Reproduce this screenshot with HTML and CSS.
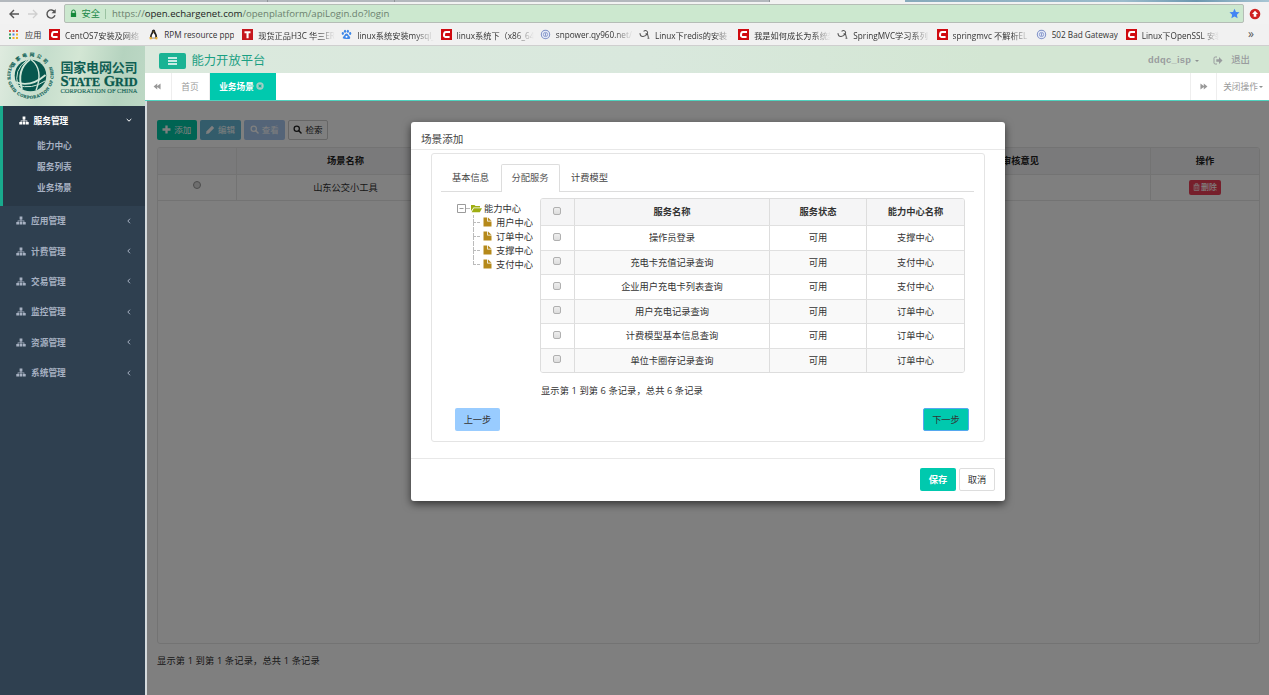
FILE: index.html
```html
<!DOCTYPE html>
<html lang="zh-CN">
<head>
<meta charset="utf-8">
<title>能力开放平台</title>
<link rel="stylesheet" href="styles.css">
</head>
<body>
<svg class="defs" aria-hidden="true">
  <symbol id="sitemap" viewBox="0 0 18 16"><path d="M6.500 1h5v5h-1.700v2.200h5.200v2.300H17.500v4.500h-5v-4.500h1.200v-1h-3.900v1h1.700v4.500h-5v-4.500h1.700v-1H4.300v1h1.200v4.500h-5v-4.500H3V8.200h5.200V6H6.500z"/></symbol>
  <symbol id="csdn" viewBox="0 0 11 11"><path fill="#d00a10" d="M0 0h11v11H0z"/><path d="M9 3H4.900Q3.400 3 3.200 4.500l-.2 1.700Q2.900 7.900 4.400 7.900h4.200" fill="none" stroke="#fff" stroke-width="2"/></symbol>
  <symbol id="globe" viewBox="0 0 12 12"><circle cx="6" cy="6" r="4.600" fill="#e6ebf8" stroke="#7f90c6" stroke-width="1.100"/><circle cx="6" cy="6" r="2.300" fill="none" stroke="#7f90c6" stroke-width=".9"/><path d="M6 4.500v3" stroke="#7f90c6"/></symbol>
  <symbol id="squirrel" viewBox="0 0 12 12"><path d="M1 4.500q.5 4 3.500 3.700T9.500 5M5 2.500q2.500-2 4 .3T7 5.500M9 4.500l1.300 5M9.300 10h2" fill="none" stroke="#555" stroke-width="1.100"/></symbol>
  <symbol id="search" viewBox="0 0 12 12"><circle cx="5" cy="5" r="3.500" fill="none" stroke="currentColor" stroke-width="1.700"/><path d="M7.700 7.700l3 3" stroke="currentColor" stroke-width="2" stroke-linecap="round"/></symbol>
  <symbol id="rewind" viewBox="0 0 10 8"><path d="M.5 4L4.700.500v2.800L8.500.500v7L4.700 4.700v2.800z"/></symbol>
  <symbol id="file" viewBox="0 0 9 10"><path fill="#b5891a" d="M.5.500h3.700v4h4.300v5h-8z"/><path fill="#b5891a" d="M5 .500l3.500 3.200H5z"/></symbol>
</svg>

<div class="window">
  <div class="strip"><i></i><i></i><i></i><b></b></div>
  <div class="toolbar">
    <svg class="nav-ico" viewBox="0 0 12 12"><path d="M11 6H2M6 2L2 6l4 4" fill="none" stroke="#555" stroke-width="1.400"/></svg>
    <svg class="nav-ico" viewBox="0 0 12 12"><path d="M1 6h9M6 2l4 4-4 4" fill="none" stroke="#cfcfcf" stroke-width="1.300"/></svg>
    <svg class="nav-ico" viewBox="0 0 12 12"><path d="M9.700 4A4.100 4.100 0 1 0 10 7.300" fill="none" stroke="#555" stroke-width="1.400"/><path d="M10.700 1v4.200H6.500z" fill="#555"/></svg>
    <div class="address">
      <svg class="lock" viewBox="0 0 8 10"><path d="M2 5V3a2 2 0 0 1 4 0v2" fill="none" stroke="#15883a" stroke-width="1.200"/><path d="M1 4.300h6v4.700H1z" fill="#15883a"/></svg>
      <span class="safe">安全</span><span class="sep"></span>
      <span class="url">https://<em>open.echargenet.com</em>/openplatform/apiLogin.do?login</span>
      <svg class="star" viewBox="0 0 12 12"><path fill="#4285f4" d="M6 .800l1.600 3.500 3.900.4-2.900 2.600.8 3.900L6 9.200l-3.400 2 .8-3.900L.5 4.700l3.900-.4z"/></svg>
    </div>
    <svg class="ext" viewBox="0 0 12 12"><circle cx="6" cy="6" r="5.300" fill="#cf2222"/><path fill="#fff" d="M6 2.700L9 6H7.300v2.700H4.700V6H3z"/></svg>
  </div>
  <div class="bookmarks">
    <div class="apps"><svg viewBox="0 0 11 11"><path fill="#e35343" d="M1 1h2v2H1zM4.500 1h2v2h-2zM8 1h2v2H8z"/><path fill="#37a25d" d="M1 4.500h2v2H1z"/><path fill="#4b83e2" d="M4.500 4.500h2v2h-2z"/><path fill="#efb324" d="M8 4.500h2v2H8zM4.500 8h2v2h-2zM8 8h2v2H8z"/><path fill="#37a25d" d="M1 8h2v2H1z"/></svg><span>应用</span></div>
    <div class="bm"><svg><use href="#csdn"/></svg><span>CentOS7安装及网络</span></div>
    <div class="bm w94"><svg viewBox="0 0 12 12"><path fill="#222" d="M6 .500q2 0 2 2.500 2.500 4 2 7H2q-.3-3 2-6.500Q4 .500 6 .500z"/><path fill="#fff" d="M6 4q2.300 2 2 5.500H4Q3.700 6 6 4z"/><path fill="#e8b23a" d="M5 3h2L6 4.200zM1.500 9l2-.5 1.500 2.500-3 .5zM10.500 9l-2-.5L7 11l3 .5z"/></svg><span>RPM resource ppp</span></div>
    <div class="bm"><svg viewBox="0 0 11 11"><path fill="#c5161d" d="M0 0h11v11H0z"/><path fill="#fff" d="M2.500 2.300h6v1.900H6.600v5H4.500v-5h-2z"/></svg><span>现货正品H3C 华三ER</span></div>
    <div class="bm"><svg viewBox="0 0 12 12"><g fill="#3d87e8"><ellipse cx="2" cy="5" rx="1.200" ry="1.600"/><ellipse cx="4.400" cy="2.500" rx="1.200" ry="1.700"/><ellipse cx="7.500" cy="2.500" rx="1.200" ry="1.700"/><ellipse cx="10" cy="5" rx="1.200" ry="1.600"/><path d="M6 5q1.400 0 2.400 2 2.300 1.600 1.600 3T6 10.900t-4-.9 1.600-3Q4.600 5 6 5z"/></g><circle cx="6" cy="8.500" r="1.100" fill="#fff"/></svg><span>linux系统安装mysql_</span></div>
    <div class="bm"><svg><use href="#csdn"/></svg><span>linux系统下（x86_64</span></div>
    <div class="bm"><svg><use href="#globe"/></svg><span>snpower.qy960.net/</span></div>
    <div class="bm"><svg><use href="#squirrel"/></svg><span>Linux下redis的安装 -</span></div>
    <div class="bm"><svg><use href="#csdn"/></svg><span>我是如何成长为系统架</span></div>
    <div class="bm"><svg><use href="#squirrel"/></svg><span>SpringMVC学习系列</span></div>
    <div class="bm"><svg><use href="#csdn"/></svg><span>springmvc 不解析EL</span></div>
    <div class="bm w90"><svg><use href="#globe"/></svg><span>502 Bad Gateway</span></div>
    <div class="bm"><svg><use href="#csdn"/></svg><span>Linux下OpenSSL 安装</span></div>
    <div class="more">»</div>
  </div>

  <div class="app">
    <aside class="side">
      <div class="logo">
        <svg width="145" height="60" viewBox="0 0 145 60">
          <circle cx="30.500" cy="29.500" r="15.800" fill="#06584e"/>
          <g fill="none" stroke="#cfe6d7">
            <path d="M30 13.500Q16 24 22 43" stroke-width="1.900"/>
            <path d="M27 14.200Q13 24 18 40" stroke-width="1"/>
            <path d="M15.500 36q15 6 30-7" stroke-width="1.700"/>
            <path d="M17 39q15 5 28-4" stroke-width="1"/>
            <path d="M31 13.500q13 10 5 31" stroke-width="1.400"/>
          </g>
          <path id="ringTop" d="M13.500 21.500A18.500 18.500 0 0 1 47.500 21.500" fill="none"/>
          <path id="ringLow" d="M11 19.500A22 22 0 1 0 50 19.500" fill="none"/>
          <text class="ring-cn"><textPath href="#ringTop" textLength="39">国家电网公司</textPath></text>
          <text class="ring-en"><textPath href="#ringLow" textLength="92">STATE GRID CORPORATION OF CHINA</textPath></text>
          <text class="brand-cn" x="60.500" y="26" textLength="77">国家电网公司</text>
          <text class="brand-en" x="60.500" y="40.300" textLength="77" lengthAdjust="spacingAndGlyphs">S<tspan class="sc">TATE</tspan> G<tspan class="sc">RID</tspan></text>
          <text class="brand-sub" x="60.500" y="47" textLength="77" lengthAdjust="spacingAndGlyphs">CORPORATION OF CHINA</text>
        </svg>
      </div>
      <div class="group open">
        <div class="item"><svg><use href="#sitemap"/></svg><span>服务管理</span><svg class="chev" viewBox="0 0 6 6"><path d="M.700 2L3 4.200 5.300 2"/></svg></div>
        <a>能力中心</a><a>服务列表</a><a>业务场景</a>
      </div>
      <div class="item"><svg><use href="#sitemap"/></svg><span>应用管理</span><svg class="chev" viewBox="0 0 6 6"><path d="M4 .700L1.800 3 4 5.300"/></svg></div>
      <div class="item"><svg><use href="#sitemap"/></svg><span>计费管理</span><svg class="chev" viewBox="0 0 6 6"><path d="M4 .700L1.800 3 4 5.300"/></svg></div>
      <div class="item"><svg><use href="#sitemap"/></svg><span>交易管理</span><svg class="chev" viewBox="0 0 6 6"><path d="M4 .700L1.800 3 4 5.300"/></svg></div>
      <div class="item"><svg><use href="#sitemap"/></svg><span>监控管理</span><svg class="chev" viewBox="0 0 6 6"><path d="M4 .700L1.800 3 4 5.300"/></svg></div>
      <div class="item"><svg><use href="#sitemap"/></svg><span>资源管理</span><svg class="chev" viewBox="0 0 6 6"><path d="M4 .700L1.800 3 4 5.300"/></svg></div>
      <div class="item"><svg><use href="#sitemap"/></svg><span>系统管理</span><svg class="chev" viewBox="0 0 6 6"><path d="M4 .700L1.800 3 4 5.300"/></svg></div>
    </aside>

    <main class="main">
      <header class="head">
        <span class="burger"><svg viewBox="0 0 9 8"><path d="M0 1h9M0 4h9M0 7h9" stroke="#fff" stroke-width="1.300"/></svg></span>
        <h1>能力开放平台</h1>
        <span class="user">ddqc_isp</span><i class="caret"></i>
        <svg class="out" viewBox="0 0 10 9"><path d="M4 1H2.200Q1 1 1 2.200v4.600Q1 8 2.200 8H4" fill="none" stroke="#999c9e" stroke-width="1"/><path fill="#999c9e" d="M3.300 3.300H6V1l3.500 3.500L6 8V5.700H3.300z"/></svg>
        <span class="quit">退出</span>
      </header>
      <nav class="tabs">
        <span class="rw"><svg><use href="#rewind"/></svg></span>
        <span class="home">首页</span>
        <span class="cur">业务场景<svg viewBox="0 0 8 8"><circle cx="4" cy="4" r="3.700" fill="#a3cfc5"/><path d="M2.600 2.600l2.800 2.800M5.400 2.600L2.600 5.400" stroke="#00b99c" stroke-width="1.200"/></svg></span>
        <span class="fw"><svg><use href="#rewind"/></svg></span>
        <span class="ops">关闭操作<i class="caret"></i></span>
      </nav>
      <section class="content">
        <div class="btns">
          <span class="btn add"><svg viewBox="0 0 9 9"><path d="M4.500.500v8M.500 4.500h8" stroke="#fff" stroke-width="2.300"/></svg>添加</span>
          <span class="btn edit"><svg viewBox="0 0 9 9"><path d="M0 9l.6-2.800L6 .800 8.200 3 2.800 8.400z" fill="#fff"/></svg>编辑</span>
          <span class="btn view"><svg><use href="#search"/></svg>查看</span>
          <span class="btn find"><svg><use href="#search"/></svg>检索</span>
        </div>
        <div class="grid-box">
          <div class="grow gh"><span></span><span>场景名称</span><span></span><span></span><span>审核意见</span><span>操作</span></div>
          <div class="grow"><span><i class="radio"></i></span><span>山东公交小工具</span><span></span><span></span><span></span><span><b class="del"><svg viewBox="0 0 8 9"><path d="M1.300 3h5.400v5.500H1.300zM.500 2.300h7M2.700 2V.700h2.600V2M3.200 4v3.500M4.800 4v3.500" fill="none" stroke="#fff" stroke-width=".8"/></svg>删除</b></span></div>
        </div>
        <p class="count">显示第 1 到第 1 条记录，总共 1 条记录</p>
        <div class="shade"></div>
      </section>
    </main>
  </div>

  <div class="modal">
    <div class="m-head">场景添加</div>
    <div class="m-body">
      <div class="panel">
        <div class="m-tabs"><span>基本信息</span><span class="on">分配服务</span><span>计费模型</span></div>
        <div class="cols">
          <div class="tree">
            <div class="root"><svg class="minus" viewBox="0 0 9 9"><path d="M.500.500h8v8h-8zM2.500 4.500h4" fill="none" stroke="#9b9b9b"/></svg><i class="dash"></i><svg class="folder" viewBox="0 0 11 9"><path fill="#9fae12" d="M0 7V1h3.500l1 1H9v1.500H2.500z"/><path fill="#9fae12" d="M2.800 4.200H11L8.800 8.200H.600z"/></svg>能力中心</div>
            <div class="kids">
              <div><svg><use href="#file"/></svg>用户中心</div>
              <div><svg><use href="#file"/></svg>订单中心</div>
              <div><svg><use href="#file"/></svg>支撑中心</div>
              <div><svg><use href="#file"/></svg>支付中心</div>
            </div>
          </div>
          <div class="svc">
            <div class="srow sh"><span><i class="cb"></i></span><span>服务名称</span><span>服务状态</span><span>能力中心名称</span></div>
            <div class="srow"><span><i class="cb"></i></span><span>操作员登录</span><span>可用</span><span>支撑中心</span></div>
            <div class="srow alt"><span><i class="cb"></i></span><span>充电卡充值记录查询</span><span>可用</span><span>支付中心</span></div>
            <div class="srow"><span><i class="cb"></i></span><span>企业用户充电卡列表查询</span><span>可用</span><span>支付中心</span></div>
            <div class="srow alt"><span><i class="cb"></i></span><span>用户充电记录查询</span><span>可用</span><span>订单中心</span></div>
            <div class="srow"><span><i class="cb"></i></span><span>计费模型基本信息查询</span><span>可用</span><span>订单中心</span></div>
            <div class="srow alt"><span><i class="cb"></i></span><span>单位卡圈存记录查询</span><span>可用</span><span>订单中心</span></div>
          </div>
        </div>
        <p class="m-count">显示第 1 到第 6 条记录，总共 6 条记录</p>
        <div class="steps"><span class="prev">上一步</span><span class="next">下一步</span></div>
      </div>
    </div>
    <div class="m-foot"><span class="save">保存</span><span class="cancel">取消</span></div>
  </div>
</div>
</body>
</html>
```
FILE: styles.css
```css
* { box-sizing: border-box; }
body { margin: 0; font-family: "Open Sans", "Noto Sans CJK SC", sans-serif; font-size: 9.25px; color: #333; }
svg { flex: none; display: block; }
.defs { position: absolute; width: 0; height: 0; }
.window { position: relative; width: 1269px; height: 695px; overflow: hidden; display: flex; flex-direction: column; background: #f1f1f1; }

/* browser chrome */
.strip { height: 2px; flex: none; display: flex; background: #f1f1f1; }
.strip i { width: 127px; border-right: 1px solid #8f9498; background: #b3b8bd; }
.strip i:first-child { width: 268px; }
.strip i:nth-child(3) { width: 375px; }
.strip b { margin-left: auto; width: 364px; background: linear-gradient(90deg, #87aabb, #9cbccc 60%, #6d98b0 80%, #a9c6d4); }
.toolbar { height: 22px; flex: none; display: flex; align-items: center; padding: 1px 8px 0; background: #f2f2f2; }
.nav-ico { width: 12px; height: 12px; margin-right: 6.500px; }
.address { width: 1180px; height: 19px; display: flex; align-items: center; border: 1px solid #b5bdb6; border-radius: 2px; background: #cce8cf; padding: 0 3px 0 5px; }
.lock { width: 7px; height: 9px; margin-right: 5px; }
.safe { color: #23894a; font-size: 9.200px; padding-bottom: 1px; }
.sep { width: 1px; height: 10px; margin: 0 6px 0 5px; background: #9bc2a1; }
.url { color: #6b806e; font-size: 9.620px; white-space: nowrap; padding-bottom: 1px; }
.url em { font-style: normal; color: #1d241e; }
.star { width: 11px; height: 11px; margin-left: auto; }
.ext { width: 12px; height: 12px; margin-left: 5px; }
.bookmarks { height: 22px; flex: none; display: flex; align-items: center; padding-left: 8px; font-size: 8.200px; color: #333; border-bottom: 1px solid #cfcfcf; }
.apps { display: flex; align-items: center; width: 41px; flex: none; gap: 6px; }
.apps svg { width: 11px; height: 11px; }
.apps span { white-space: nowrap; padding-bottom: 1px; }
.bm { width: 99.200px; flex: none; display: flex; align-items: center; gap: 5px; }
.bm.w94 { width: 94px; }
.bm.w90 { width: 90px; }
.bm svg { width: 11px; height: 11px; }
.bm span { width: 81px; overflow: hidden; white-space: nowrap; -webkit-mask-image: linear-gradient(90deg, #000 72%, transparent 95%); mask-image: linear-gradient(90deg, #000 72%, transparent 95%); }
.bm.w94 span, .bm.w90 span { width: auto; -webkit-mask-image: none; mask-image: none; }
.more { margin-left: 23px; color: #555; font-size: 12px; line-height: 12px; padding-bottom: 2px; }

/* application frame */
.app { flex: 1; min-height: 0; display: flex; }
.side { width: 145px; flex: none; background: #2f4050; font-weight: 600; }
.logo { height: 60px; background: linear-gradient(100deg, #dfebdf 0, #c5ddcc 30%, #d3e6d4 52%, #b5d3bf 80%, #bdd8c5 100%); }
.ring-cn { font: 900 4.800px "Noto Sans CJK SC"; fill: #17675c; }
.ring-en { font: bold 4.300px "Liberation Serif"; fill: #17675c; stroke: #17675c; stroke-width: .2px; dominant-baseline: middle; }
.brand-cn { font: 700 13px "Noto Sans CJK SC"; fill: #115f54; }
.brand-en { font: bold 15px "Liberation Serif"; fill: #0b5a4e; stroke: #0b5a4e; stroke-width: .3px; }
.brand-en .sc { font-size: 12.500px; }
.brand-sub { font: 6.500px "Liberation Serif"; fill: #1d6a5c; stroke: #1d6a5c; stroke-width: .15px; }
.item { height: 30.400px; display: flex; align-items: center; padding: 0 13.500px 1px 16px; color: #a7b1c2; font-size: 8.700px; }
.item svg { width: 10px; height: 9px; fill: currentColor; }
.item span { margin-left: 5px; font-weight: 700; white-space: nowrap; }
.item .chev { width: 6px; height: 6px; margin-left: auto; fill: none; stroke: currentColor; stroke-width: 1; }
.group.open { height: 100px; background: #293846; border-left: 3px solid #19aa8d; }
.group .item { color: #fff; height: 29px; padding-left: 15.500px; padding-bottom: 1px; }
.group a { display: block; height: 21px; line-height: 23px; padding-left: 34px; color: #a7b1c2; font-size: 8.700px; }
.main { flex: 1; min-width: 0; display: flex; flex-direction: column; }
.head { height: 27px; flex: none; display: flex; align-items: center; padding: 2px 19px 0 13.500px; background: linear-gradient(90deg, #dbe9dd, #d9e8dd 45%, #d3e6d3 75%); color: #999c9e; }
.burger { width: 27px; height: 16px; display: flex; align-items: center; justify-content: center; border-radius: 2px; background: #1ab394; }
.burger svg { width: 9px; height: 8px; }
h1 { margin: 0 auto 0 6px; font-size: 12.300px; font-weight: 400; color: #1aa083; line-height: 20px; }
.user { font: bold 9.300px "Liberation Sans"; letter-spacing: .3px; padding-bottom: 1px; }
.caret { width: 0; height: 0; margin-left: 4px; border: 2.500px solid transparent; border-top-color: #8d9192; border-bottom: 0; }
.out { width: 10px; height: 9px; margin: 0 0 1px 14px; }
.quit { margin-left: 8px; font-size: 9.400px; font-weight: 500; padding-bottom: 3px; }
.tabs { height: 28px; flex: none; display: flex; background: #fff; border-bottom: 1px solid #4fd3bf; color: #999; }
.tabs > span { display: flex; align-items: center; justify-content: center; border-right: 1px solid #eee; }
.tabs svg { fill: #999; }
.rw, .fw { width: 27px; }
.rw svg, .fw svg { width: 9px; height: 7px; }
.tabs .rw { width: 26.500px; }
.home { width: 38px; font-size: 8.700px; padding-bottom: 1px; }
.tabs .cur { width: 66px; background: #00c9ae; border: 0; color: #fff; font-weight: 700; font-size: 8.700px; padding: 0 2px 1px 0; }
.cur svg { width: 8px; height: 8px; margin-left: 2px; }
.tabs .fw { margin-left: auto; border-left: 1px solid #eee; }
.fw svg { transform: scaleX(-1); }
.tabs .ops { width: 52px; border: 0; font-size: 8.700px; white-space: nowrap; }
.ops .caret { margin-left: 1px; }
.content { position: relative; flex: 1; border-left: 2px solid #d5dadd; background: #fff; padding: 19px 9px 0 10px; }
.btns { display: flex; gap: 3px; margin-left: -.5px; }
.btn { width: 40.700px; height: 19.500px; display: flex; align-items: center; justify-content: center; gap: 3px; padding-bottom: 1px; border-radius: 2px; color: #fff; font-size: 8.500px; }
.btn svg { width: 9px; height: 9px; }
.add { background: #00c9a6; }
.edit { background: #66b9d6; }
.view { background: #a9c9f0; }
.find { border: 1px solid #ccc; color: #222; }
.grid-box { height: 497px; margin-top: 7.500px; border: 1px solid #e6e6e6; border-radius: 3px; overflow: hidden; }
.grow { display: grid; grid-template-columns: 79px 218px 218px 218px 260px 1fr; height: 26px; border-bottom: 1px solid #e6e6e6; }
.grow > span { display: flex; align-items: center; justify-content: center; padding-bottom: 2px; border-right: 1px solid #e6e6e6; }
.grow > span:last-child { border-right: 0; }
.gh { height: 27px; background: #f5f5f6; font-weight: 700; color: #222; }
.radio { width: 8px; height: 8px; margin: 0 1px 3px 0; border: 1px solid #999; border-radius: 50%; background: #ddd; }
.del { display: flex; align-items: center; justify-content: center; gap: 1px; width: 32px; height: 15px; padding-bottom: 1px; margin-top: 1px; border-radius: 2px; background: #ed3f57; color: #fff; font-size: 8px; font-weight: 500; }
.del svg { width: 7px; height: 8px; }
.count { margin: 9px 0 0; line-height: 15px; letter-spacing: .13px; }
.shade { position: absolute; inset: 0 0 0 0; background: rgba(0, 0, 0, .5); }

/* dialog */
.modal { position: absolute; left: 411px; top: 122px; width: 594px; height: 379px; display: flex; flex-direction: column; background: #fff; border-radius: 3px; box-shadow: 0 3px 9px rgba(0, 0, 0, .6); }
.m-head { height: 28px; flex: none; padding: 7px 10px 0; line-height: 20px; font-size: 10.600px; color: #444; border-bottom: 1px solid #e8e8e8; }
.m-body { height: 309px; flex: none; padding: 3px 20px 0; border-bottom: 1px solid #e8e8e8; }
.panel { height: 289px; padding: 10px 10px 0 9px; border: 1px solid #e4e4e4; border-radius: 3px; }
.m-tabs { height: 28px; display: flex; border-bottom: 1px solid #ddd; }
.m-tabs span { width: 60px; height: 27px; line-height: 27px; text-align: center; color: #444; padding-right: 1px; }
.m-tabs .on { width: 59px; height: 28px; line-height: 26px; border: 1px solid #ddd; border-bottom: 0; border-radius: 2px 2px 0 0; background: #fff; color: #555; }
.cols { display: flex; padding-top: 6px; }
.tree { width: 99px; flex: none; padding: 3px 0 0 16px; color: #333; }
.tree div { white-space: nowrap; }
.root { height: 14px; display: flex; align-items: center; }
.minus { width: 9px; height: 9px; }
.dash { width: 4px; height: 1px; background: #bbb; }
.folder { width: 11px; height: 9px; margin: 0 2px 0 1px; }
.kids { width: 70px; margin-left: 16px; }
.kids div { height: 14px; display: flex; align-items: center; gap: 4px; background: repeating-linear-gradient(#bbb 0 3px, transparent 3px 4px) 0 0 / 1px 100% no-repeat, repeating-linear-gradient(90deg, #bbb 0 3px, transparent 3px 4px) 0 7px / 7px 1px no-repeat; }
.kids div:last-child { background-size: 1px 7px, 7px 1px; }
.kids svg { width: 9px; height: 10px; margin-left: 10px; }
.svc { width: 425px; border: 1px solid #ddd; border-radius: 3px; overflow: hidden; }
.srow { display: grid; grid-template-columns: 34px 195px 97px 1fr; height: 24.500px; border-top: 1px solid #e0e0e0; }
.srow > span { display: flex; align-items: center; justify-content: center; padding-bottom: 1.500px; border-right: 1px solid #ddd; }
.srow > span:last-child { border-right: 0; }
.sh { height: 26px; border-top: 0; background: #f5f5f6; font-weight: 700; }
.alt { background: #f9f9f9; }
.cb { width: 8px; height: 8px; margin: 0 1px 1px 0; border: 1px solid #b0b0b0; border-radius: 2px; background: linear-gradient(#eee, #ddd); }
.m-count { margin: 10px 0 0 100px; line-height: 15px; letter-spacing: .09px; }
.steps { display: flex; justify-content: space-between; padding: 10px 5px 0 14px; }
.steps span, .m-foot span { height: 23px; display: flex; align-items: center; justify-content: center; padding-bottom: 1px; border-radius: 2px; }
.prev { width: 45px; background: #99ccff; }
.next { width: 46px; background: #00c9ae; border: 1px solid #55a8ef; }
.m-foot { display: flex; justify-content: flex-end; gap: 3px; padding: 9px 10px 0; }
.save { width: 36px; background: #00c9ae; color: #fff; font-weight: 700; }
.cancel { width: 36px; border: 1px solid #ddd; }
```
